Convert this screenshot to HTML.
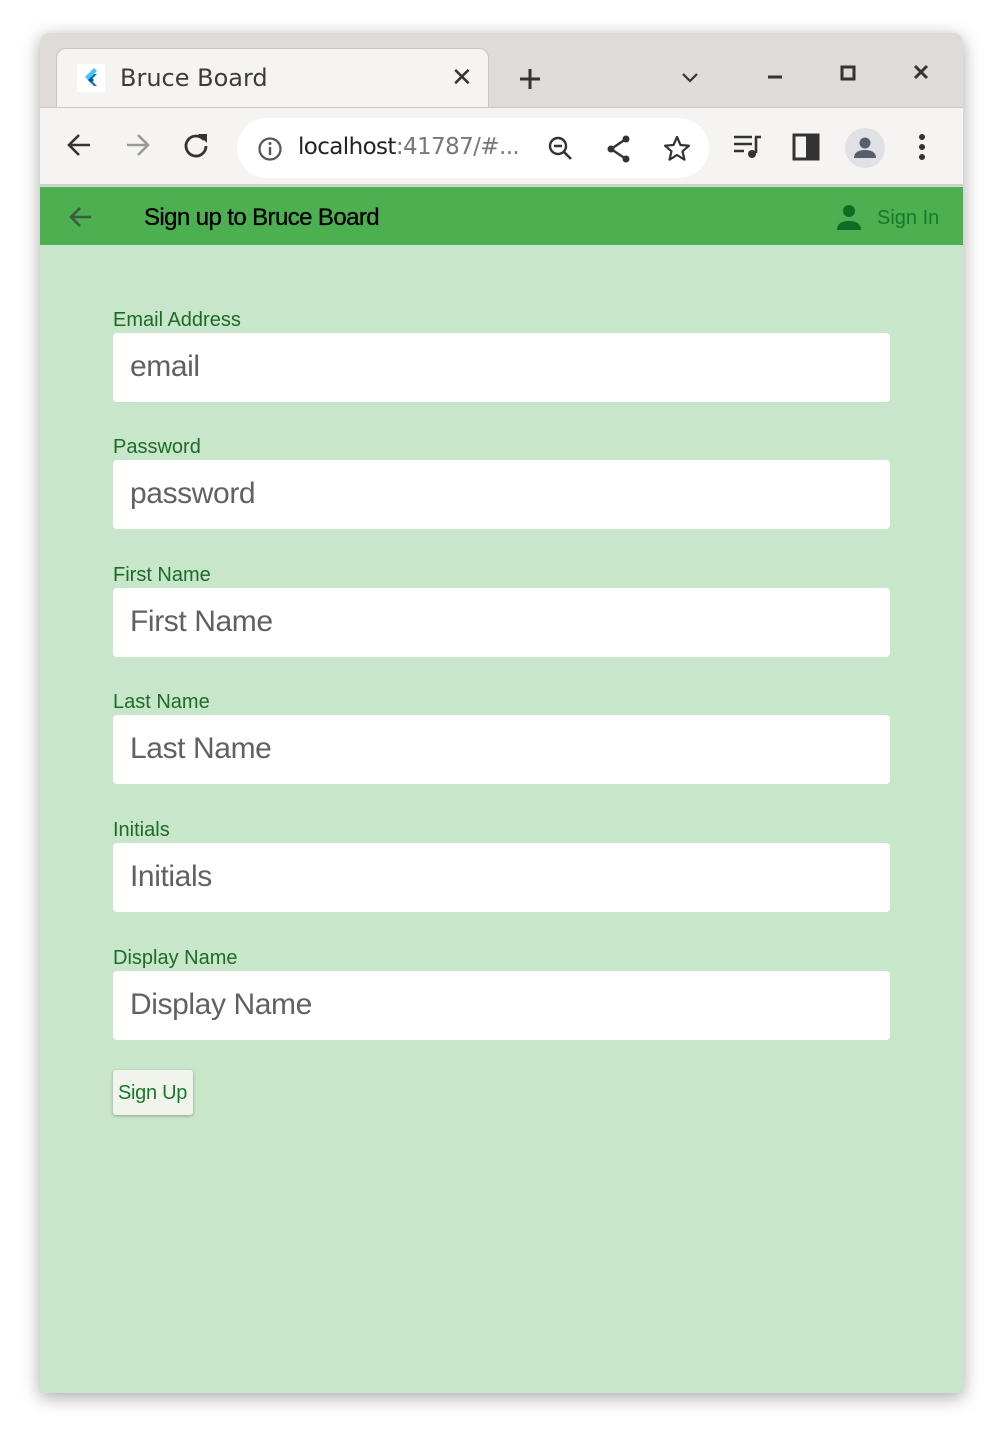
<!DOCTYPE html>
<html><head><style>
*{box-sizing:border-box;margin:0;padding:0}
body{width:1001px;height:1436px;background:#fff;font-family:"Liberation Sans",sans-serif;position:relative;overflow:hidden}
.win{position:absolute;left:40px;top:33px;width:923px;height:1360px;border-radius:10px 10px 0 0;overflow:hidden;box-shadow:0 4px 18px rgba(0,0,0,.35);background:#c8e6c9}
.strip{position:absolute;left:0;top:0;width:923px;height:74px;background:#dedbd8}
.tab{position:absolute;left:16px;top:15px;width:433px;height:62px;background:#f5f4f2;border-radius:10px 10px 0 0;border:1px solid #c9c6c3;border-bottom:none}
.tool{position:absolute;left:0;top:74px;width:923px;height:79px;background:#f5f4f2;border-top:1px solid #c9c6c3;border-bottom:2px solid #cfcdcb}
.omni{position:absolute;left:197px;top:10px;width:472px;height:60px;background:#fff;border-radius:30px}
.bar{position:absolute;left:0;top:154px;width:923px;height:58px;background:#4caf50}
.lbl{position:absolute;left:73px;font-size:20px;color:#1e6a28}
.inp{position:absolute;left:73px;width:777px;height:69px;background:#fff;border-radius:4px;font-size:30px;color:#616161;padding:16px 17px;line-height:36px;letter-spacing:-.4px}
svg{position:absolute}
</style></head><body>
<div class="win">
<div class="strip"></div>
<div class="tab"></div>
<svg style="left:37px;top:31px" width="28" height="28" viewBox="0 0 28 28"><rect width="28" height="28" fill="#fff"/><path d="M17 4 L8 13 L11 16 L20 7Z" fill="#47c5fb"/><path d="M11 16 L17 22 L20 22 L14 16 L20 10 L17 10Z" fill="#0175c2"/><path d="M11 16 L14 19 L17 16 L14 13Z" fill="#02569b"/></svg>
<div style="position:absolute;left:80px;top:31px;color:#3c3c3c;font-family:'DejaVu Sans',sans-serif;font-size:24px">Bruce Board</div>
<div style="position:absolute;left:411px;top:29px;font-size:26px;color:#333">✕</div>
<svg style="left:477px;top:33px" width="26" height="26"><path d="M13 3v20M3 13h20" stroke="#333" stroke-width="3"/></svg>
<svg style="left:640px;top:38px" width="20" height="14"><path d="M3 3l7 7 7-7" stroke="#333" stroke-width="2.2" fill="none"/></svg>
<svg style="left:726px;top:40px" width="18" height="8"><path d="M2 4h14" stroke="#333" stroke-width="3"/></svg>
<svg style="left:800px;top:32px" width="16" height="16"><rect x="2" y="2" width="12" height="12" stroke="#333" stroke-width="3" fill="none"/></svg>
<svg style="left:872px;top:30px" width="18" height="18"><path d="M3 3l12 12M15 3L3 15" stroke="#333" stroke-width="3"/></svg>
<div class="tool">
<svg style="left:24px;top:22px" width="30" height="30"><path d="M26 15H6M15 5L5 15l10 10" stroke="#333" stroke-width="2.6" fill="none"/></svg>
<svg style="left:83px;top:22px" width="30" height="30"><path d="M4 15h20M15 5l10 10-10 10" stroke="#999" stroke-width="2.6" fill="none"/></svg>
<svg style="left:141px;top:22px" width="30" height="30"><path d="M23 10A10 10 0 1 0 25 16" stroke="#333" stroke-width="2.8" fill="none"/><path d="M17 4h9v9z" fill="#333"/></svg>
<div class="omni">
<svg style="left:20px;top:18px" width="26" height="26"><circle cx="13" cy="13" r="10.5" stroke="#555" stroke-width="2.2" fill="none"/><path d="M13 11v8" stroke="#555" stroke-width="2.4"/><circle cx="13" cy="7.5" r="1.5" fill="#555"/></svg>
<div style="position:absolute;left:61px;top:16px;font-size:23px;font-family:'DejaVu Sans',sans-serif;color:#222;letter-spacing:-.6px">localhost<span style="color:#777">:41787/#...</span></div>
<svg style="left:310px;top:17px" width="28" height="28"><circle cx="11" cy="11" r="8" stroke="#333" stroke-width="2.4" fill="none"/><path d="M7 11h8M17 17l7 7" stroke="#333" stroke-width="2.6"/></svg>
<svg style="left:368px;top:16px" width="28" height="30"><circle cx="21" cy="5" r="3.5" fill="#333"/><circle cx="6" cy="15" r="3.5" fill="#333"/><circle cx="21" cy="25" r="3.5" fill="#333"/><path d="M21 5L6 15l15 10" stroke="#333" stroke-width="2.4" fill="none"/></svg>
<svg style="left:425px;top:16px" width="30" height="30"><path d="M15 3l3.5 8 8.5.7-6.5 5.6 2 8.4L15 21l-7.5 4.7 2-8.4L3 11.7l8.5-.7z" stroke="#333" stroke-width="2.2" fill="none" stroke-linejoin="round"/></svg>
</div>
<svg style="left:692px;top:25px" width="32" height="28"><path d="M2 4h18M2 11h18M2 18h10" stroke="#333" stroke-width="2.6"/><path d="M23 4h6M24 4v16" stroke="#333" stroke-width="2.6"/><circle cx="20" cy="21" r="4" fill="#333"/></svg>
<svg style="left:752px;top:25px" width="28" height="28"><rect x="2" y="2" width="24" height="24" stroke="#333" stroke-width="3" fill="none"/><rect x="14" y="2" width="12" height="24" fill="#333"/></svg>
<svg style="left:804px;top:19px" width="42" height="42"><circle cx="21" cy="21" r="20" fill="#dfe1e5"/><circle cx="21" cy="16" r="5.5" fill="#555f70"/><path d="M10 31c0-6 5-8 11-8s11 2 11 8z" fill="#555f70"/></svg>
<svg style="left:876px;top:24px" width="12" height="32"><circle cx="6" cy="5" r="3" fill="#333"/><circle cx="6" cy="15" r="3" fill="#333"/><circle cx="6" cy="25" r="3" fill="#333"/></svg>
</div>
<div class="bar">
<svg style="left:26px;top:16px" width="28" height="28"><path d="M25 14H5M14 5l-9 9 9 9" stroke="#3b5c3c" stroke-width="2.6" fill="none"/></svg>
<div style="position:absolute;left:104px;top:17px;font-size:24px;color:#000;letter-spacing:-.6px;-webkit-text-stroke:.3px #000">Sign up to Bruce Board</div>
<svg style="left:795px;top:16px" width="28" height="28"><circle cx="14" cy="8" r="6" fill="#106b24"/><path d="M2 27c0-7 6-9 12-9s12 2 12 9z" fill="#106b24"/></svg>
<div style="position:absolute;left:837px;top:20px;font-size:20px;color:#17792a">Sign In</div>
</div>
<div class="lbl" style="top:276px">Email Address</div><div class="inp" style="top:300px">email</div>
<div class="lbl" style="top:403px">Password</div><div class="inp" style="top:427px">password</div>
<div class="lbl" style="top:531px">First Name</div><div class="inp" style="top:555px">First Name</div>
<div class="lbl" style="top:658px">Last Name</div><div class="inp" style="top:682px">Last Name</div>
<div class="lbl" style="top:786px">Initials</div><div class="inp" style="top:810px">Initials</div>
<div class="lbl" style="top:914px">Display Name</div><div class="inp" style="top:938px">Display Name</div>
<div style="position:absolute;left:73px;top:1037px;width:80px;height:45px;background:#f0f4ec;border-radius:3px;box-shadow:0 1px 3px rgba(0,0,0,.3);font-size:20px;color:#17792a;padding:12px 0 0 5px;letter-spacing:-.3px">Sign Up</div>
</div>
</body></html>
